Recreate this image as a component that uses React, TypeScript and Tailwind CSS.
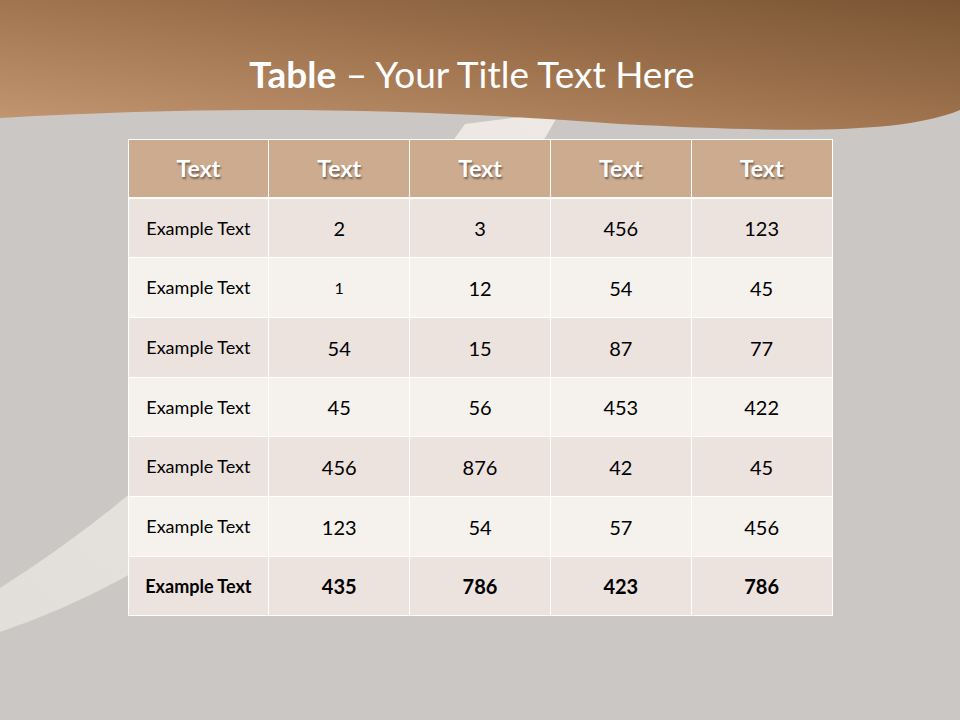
import React from 'react'

const rows: string[][] = [
  ['Example Text', '2', '3', '456', '123'],
  ['Example Text', '1', '12', '54', '45'],
  ['Example Text', '54', '15', '87', '77'],
  ['Example Text', '45', '56', '453', '422'],
  ['Example Text', '456', '876', '42', '45'],
  ['Example Text', '123', '54', '57', '456'],
]
const total = ['Example Text', '435', '786', '423', '786']
const heights = ['h-[58px]', 'h-[59px]', 'h-[59px]', 'h-[58px]', 'h-[59px]', 'h-[59px]', 'h-[58px]']

const Backdrop = () => (
  <svg className="absolute inset-0" width="960" height="720" viewBox="0 0 960 720">
    <defs>
      <linearGradient id="band" x1="0" y1="1" x2="1" y2="0">
        <stop offset="0" stopColor="#c39873" />
        <stop offset="0.55" stopColor="#9c714c" />
        <stop offset="1" stopColor="#7a5534" />
      </linearGradient>
      <linearGradient id="blade" x1="0" y1="1" x2="1" y2="0">
        <stop offset="0" stopColor="#e2deda" />
        <stop offset="1" stopColor="#eee9e4" />
      </linearGradient>
    </defs>
    <rect width="960" height="720" fill="#cbc7c4" />
    <path d="M0 588 Q 250 430 465 124 L 560 112 Q 330 520 0 632 Z" fill="url(#blade)" />
    <path d="M0 0 H960 V110 C 900 135, 780 132, 620 124 C 430 110, 250 104, 0 118 Z" fill="url(#band)" />
  </svg>
)

export default function App() {
  const font = { fontFamily: 'Lato, "Open Sans", sans-serif' }
  return (
    <div className="relative w-[960px] h-[720px] overflow-hidden" style={font}>
      <Backdrop />
      <div className="relative flex flex-col items-center">
        <h1 className="h-[139px] pt-[50px] mr-[16px] text-[37px] leading-[48px] text-white">
          <span className="font-bold">Table</span> – Your Title Text Here
        </h1>
        <div className="w-[705px] bg-white p-px flex flex-col gap-px">
          <div className="grid grid-cols-5 gap-px h-[57px] mb-px">
            {['Text', 'Text', 'Text', 'Text', 'Text'].map((h, i) => (
              <div
                key={i}
                className="bg-[#ccab8f] flex items-center justify-center text-white font-bold text-[23px] [text-shadow:1px_2px_2px_rgba(0,0,0,0.45)]"
              >
                {h}
              </div>
            ))}
          </div>
          {[...rows, total].map((r, ri) => (
            <div key={ri} className={`grid grid-cols-5 gap-px ${heights[ri]}`}>
              {r.map((c, ci) => (
                <div
                  key={ci}
                  className={`flex items-center justify-center text-black ${ri % 2 === 0 ? 'bg-[#ece2de]' : 'bg-[#f5f2ee]'} ${ci === 0 ? 'text-[18px]' : c === '1' ? 'text-[16px]' : 'text-[20px]'} ${ri === 6 ? 'font-bold' : ''}`}
                >
                  {c}
                </div>
              ))}
            </div>
          ))}
        </div>
      </div>
    </div>
  )
}
